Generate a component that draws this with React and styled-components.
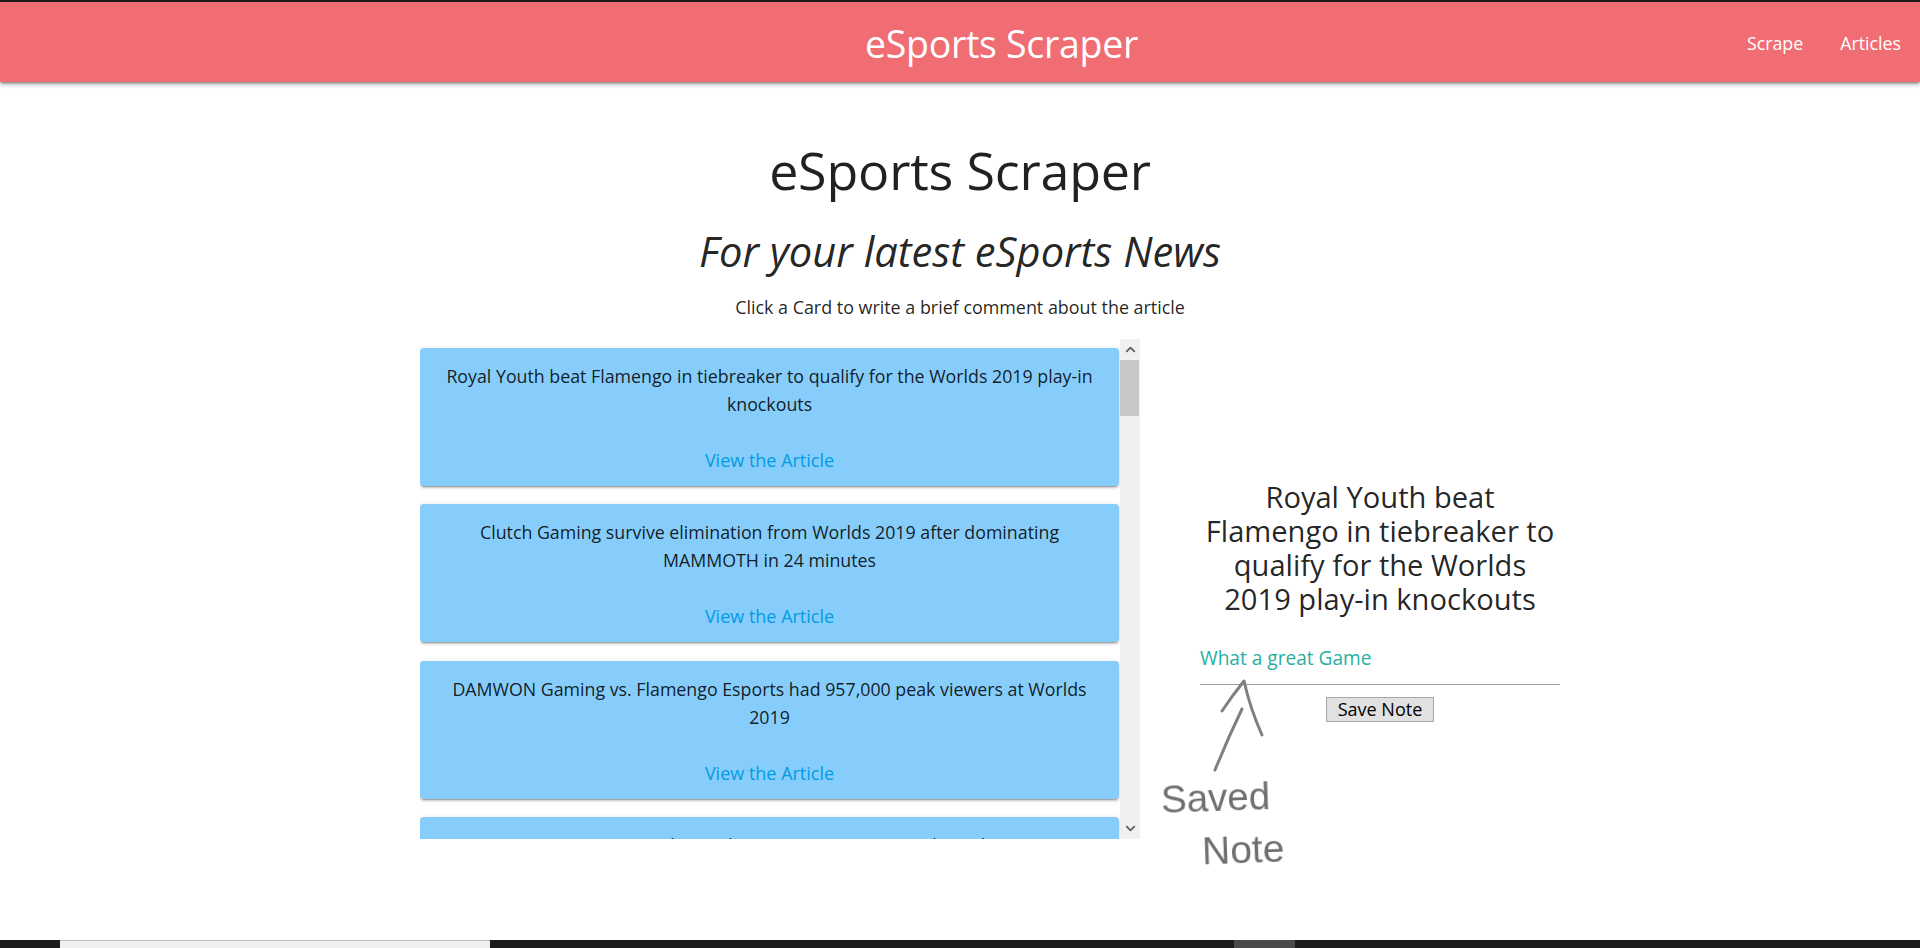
import React from 'react';
import styled, { createGlobalStyle } from 'styled-components';
import { ChevronUp, ChevronDown } from 'lucide-react';

const GlobalStyle = createGlobalStyle`
  html, body {
    margin: 0;
    padding: 0;
    background: #fff;
  }
  body {
    font-family: 'Open Sans', 'Noto Sans', sans-serif;
    color: rgba(0, 0, 0, 0.87);
    overflow: hidden;
  }
`;

const Page = styled.div`
  height: 948px;
  display: flex;
  flex-direction: column;
  position: relative;
`;

const Navbar = styled.nav`
  height: 78px;
  flex: none;
  border-top: 2px solid #1c1c1c;
  background: #f06d74;
  box-shadow: 0 2px 2px 0 rgba(0, 0, 0, 0.14), 0 3px 1px -2px rgba(0, 0, 0, 0.12), 0 2px 5px 0 rgba(0, 0, 0, 0.3);
  display: flex;
  align-items: center;
  color: #fff;
  padding: 2px 19px 0 865px;
`;

const Brand = styled.a`
  font-size: 37.5px;
  letter-spacing: -0.3px;
  margin-right: auto;
`;

const NavLinks = styled.div`
  display: flex;
  gap: 37px;
  font-size: 17.8px;
`;

const Main = styled.main`
  flex: 1;
  min-height: 0;
`;

const Hero = styled.header`
  text-align: center;
  padding-top: 53px;
`;

const Title = styled.h1`
  margin: 0;
  font-size: 52px;
  font-weight: 400;
  line-height: 70px;
  letter-spacing: -0.2px;
`;

const Subtitle = styled.h2`
  margin: 20px 0 0;
  font-size: 41.7px;
  font-weight: 400;
  font-style: italic;
  line-height: 52px;
`;

const Hint = styled.p`
  margin: 18px 0 0;
  font-size: 17.9px;
  line-height: 24px;
`;

const Columns = styled.div`
  display: flex;
  margin: 20px 0 0 420px;
`;

const CardList = styled.div`
  width: 700px;
  height: 500px;
  flex: none;
  box-sizing: border-box;
  padding: 9px 1px 0 0;
  overflow: hidden;
`;

const Scrollbar = styled.div`
  width: 20px;
  height: 500px;
  flex: none;
  background: #f0f0f0;
  display: flex;
  flex-direction: column;
  margin-right: 60px;
`;

const ScrollArrow = styled.div`
  height: 21px;
  flex: none;
  display: flex;
  align-items: center;
  justify-content: center;
  color: #606060;
`;

const ScrollTrack = styled.div`
  flex: 1;
`;

const ScrollThumb = styled.div`
  width: 19px;
  height: 56px;
  background: #c8c8c8;
`;

const Card = styled.article`
  height: 138px;
  box-sizing: border-box;
  margin-bottom: 18.3px;
  padding: 14px 24px 0;
  background: #86cdfb;
  border-radius: 4px;
  text-align: center;
  font-size: 17.8px;
  line-height: 28px;
  box-shadow: 0 2px 2px 0 rgba(0, 0, 0, 0.14), 0 3px 1px -2px rgba(0, 0, 0, 0.2), 0 1px 5px 0 rgba(0, 0, 0, 0.14);
  display: flex;
  flex-direction: column;
`;

const CardTitle = styled.div`
  height: 84px;
  flex: none;
`;

const CardLink = styled.a`
  color: #039be5;
  font-size: 18px;
`;

const NotePanel = styled.section`
  width: 360px;
  flex: none;
  padding-top: 141px;
`;

const NoteTitle = styled.h3`
  margin: 0 auto;
  width: 352px;
  text-align: center;
  font-size: 29.1px;
  font-weight: 400;
  line-height: 34px;
`;

const NoteInput = styled.div`
  margin-top: 21px;
  height: 48px;
  line-height: 42px;
  box-sizing: border-box;
  border-bottom: 1px solid #9e9e9e;
  color: #2aaea2;
  font-size: 19.1px;
`;

const SaveButton = styled.button`
  display: block;
  margin: 12px 0 0 126px;
  width: 108px;
  height: 25px;
  padding: 0;
  font-family: inherit;
  font-size: 18px;
  line-height: 21px;
  color: #000;
  background: #e1e1e1;
  border: 1px solid #a6a6a6;
`;

const Annotation = styled.div`
  position: absolute;
  left: 1140px;
  top: 630px;
  width: 320px;
  height: 260px;
  pointer-events: none;
`;

const Arrow = styled.svg`
  position: absolute;
  inset: 0;
  filter: blur(0.6px);
`;

const Scrawl = styled.span`
  position: absolute;
  left: ${props => props.$left}px;
  top: ${props => props.$top}px;
  font-family: 'Liberation Sans', sans-serif;
  font-size: ${props => props.$size}px;
  line-height: 48px;
  color: #6f6f6f;
  filter: blur(0.7px);
  transform: rotate(-2deg);
`;

const Taskbar = styled.footer`
  height: 8px;
  flex: none;
  display: flex;
  background: #1a1c1e;
  padding-left: 60px;
`;

const TaskbarTab = styled.div`
  width: 430px;
  box-sizing: border-box;
  background: #f0f0f0;
  border-top: 1px solid #bdbdbd;
`;

const TaskbarIcon = styled.div`
  width: 61px;
  margin-left: 744px;
  background: #4a4a4a;
`;

const articles = [
  'Royal Youth beat Flamengo in tiebreaker to qualify for the Worlds 2019 play-in knockouts',
  'Clutch Gaming survive elimination from Worlds 2019 after dominating MAMMOTH in 24 minutes',
  'DAMWON Gaming vs. Flamengo Esports had 957,000 peak viewers at Worlds 2019',
  'Fnatic sweeps the Mad Lions to Win Rogue Rank Finale',
];

export default function App() {
  return (
    <Page>
      <GlobalStyle />
      <Navbar>
        <Brand>eSports Scraper</Brand>
        <NavLinks>
          <a>Scrape</a>
          <a>Articles</a>
        </NavLinks>
      </Navbar>
      <Main>
        <Hero>
          <Title>eSports Scraper</Title>
          <Subtitle>For your latest eSports News</Subtitle>
          <Hint>Click a Card to write a brief comment about the article</Hint>
        </Hero>
        <Columns>
          <CardList>
            {articles.map(title => (
              <Card key={title}>
                <CardTitle>{title}</CardTitle>
                <CardLink>View the Article</CardLink>
              </Card>
            ))}
          </CardList>
          <Scrollbar>
            <ScrollArrow>
              <ChevronUp size={15} strokeWidth={3} />
            </ScrollArrow>
            <ScrollTrack>
              <ScrollThumb />
            </ScrollTrack>
            <ScrollArrow>
              <ChevronDown size={15} strokeWidth={3} />
            </ScrollArrow>
          </Scrollbar>
          <NotePanel>
            <NoteTitle>Royal Youth beat Flamengo in tiebreaker to qualify for the Worlds 2019 play-in knockouts</NoteTitle>
            <NoteInput>What a great Game</NoteInput>
            <SaveButton>Save Note</SaveButton>
          </NotePanel>
        </Columns>
      </Main>
      <Annotation>
        <Arrow viewBox="0 0 320 260" width="320" height="260">
          <path
            d="M75 140 Q88 108 102 79 M82 81 Q92 66 104 51 Q110 78 122 105"
            fill="none"
            stroke="#808080"
            strokeWidth="3"
            strokeLinecap="round"
            strokeLinejoin="round"
          />
        </Arrow>
        <Scrawl $left={21} $top={144} $size={38.5}>Saved</Scrawl>
        <Scrawl $left={62} $top={196} $size={39}>Note</Scrawl>
      </Annotation>
      <Taskbar>
        <TaskbarTab />
        <TaskbarIcon />
      </Taskbar>
    </Page>
  );
}
